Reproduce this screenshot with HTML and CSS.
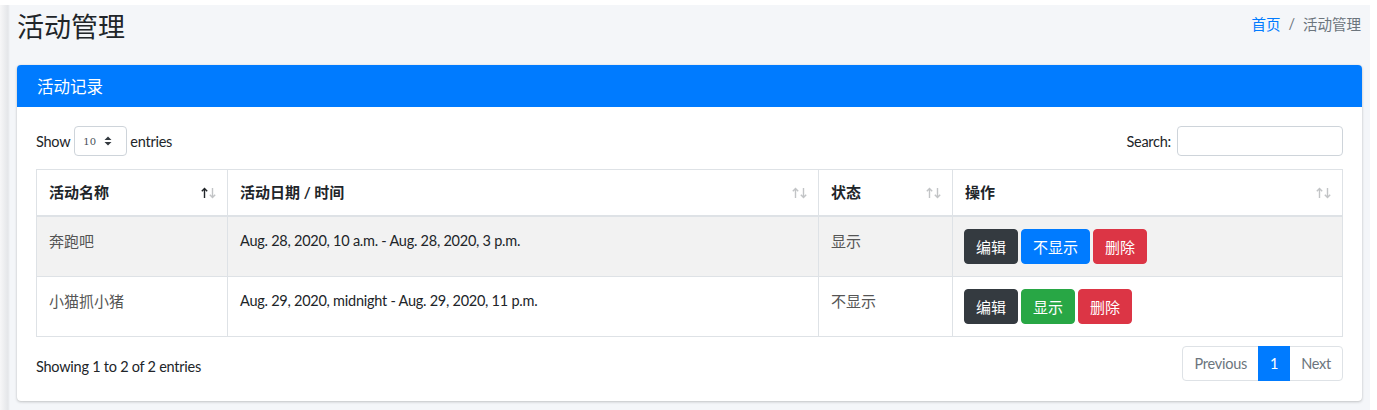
FILE: index.html
```html
<!DOCTYPE html>
<html lang="zh">
<head>
<meta charset="utf-8">
<title>活动管理</title>
<link rel="stylesheet" href="styles.css">
</head>
<body>
<div class="wrapper">
  <div class="content-header">
    <h1 class="page-title">活动管理</h1>
    <ol class="breadcrumb">
      <li class="crumb"><a class="crumb-link" href="#">首页</a></li>
      <li class="crumb-sep">/</li>
      <li class="crumb current">活动管理</li>
    </ol>
  </div>

  <div class="card">
    <div class="card-header">活动记录</div>
    <div class="card-body">
      <div class="dt-controls">
        <div class="dt-length">
          <span>Show</span>
          <div class="select">
            <span class="select-value">10</span>
            <svg class="select-caret" width="8" height="10" viewBox="0 0 8 10"><path d="M4 0.5 L7.5 4 L0.5 4 Z M4 9.5 L7.5 6 L0.5 6 Z" fill="#343a40"/></svg>
          </div>
          <span>entries</span>
        </div>
        <div class="dt-search">
          <span>Search:</span>
          <div class="search-input"></div>
        </div>
      </div>

      <table class="table">
        <colgroup>
          <col class="c1"><col class="c2"><col class="c3"><col class="c4">
        </colgroup>
        <thead>
          <tr>
            <th><div class="th-inner"><span>活动名称</span>
              <svg class="sort" width="16" height="12" viewBox="0 0 16 12"><g fill="none" stroke-width="1.4"><path d="M3.5 11 V1.5 M0.8 4.2 L3.5 1.5 L6.2 4.2" stroke="#212529"/><path d="M11.5 1 V10.5 M8.8 7.8 L11.5 10.5 L14.2 7.8" stroke="#c2c4c6"/></g></svg></div></th>
            <th><div class="th-inner"><span>活动日期 / 时间</span>
              <svg class="sort" width="16" height="12" viewBox="0 0 16 12"><g fill="none" stroke-width="1.4" stroke="#c2c4c6"><path d="M3.5 11 V1.5 M0.8 4.2 L3.5 1.5 L6.2 4.2"/><path d="M11.5 1 V10.5 M8.8 7.8 L11.5 10.5 L14.2 7.8"/></g></svg></div></th>
            <th><div class="th-inner"><span>状态</span>
              <svg class="sort" width="16" height="12" viewBox="0 0 16 12"><g fill="none" stroke-width="1.4" stroke="#c2c4c6"><path d="M3.5 11 V1.5 M0.8 4.2 L3.5 1.5 L6.2 4.2"/><path d="M11.5 1 V10.5 M8.8 7.8 L11.5 10.5 L14.2 7.8"/></g></svg></div></th>
            <th><div class="th-inner"><span>操作</span>
              <svg class="sort" width="16" height="12" viewBox="0 0 16 12"><g fill="none" stroke-width="1.4" stroke="#c2c4c6"><path d="M3.5 11 V1.5 M0.8 4.2 L3.5 1.5 L6.2 4.2"/><path d="M11.5 1 V10.5 M8.8 7.8 L11.5 10.5 L14.2 7.8"/></g></svg></div></th>
          </tr>
        </thead>
        <tbody>
          <tr class="odd">
            <td class="cjk">奔跑吧</td>
            <td>Aug. 28, 2020, 10 a.m. - Aug. 28, 2020, 3 p.m.</td>
            <td class="cjk">显示</td>
            <td class="act-cell"><div class="actions"><span class="btn btn-dark">编辑</span><span class="btn btn-primary">不显示</span><span class="btn btn-danger">删除</span></div></td>
          </tr>
          <tr>
            <td class="cjk">小猫抓小猪</td>
            <td>Aug. 29, 2020, midnight - Aug. 29, 2020, 11 p.m.</td>
            <td class="cjk">不显示</td>
            <td class="act-cell"><div class="actions"><span class="btn btn-dark">编辑</span><span class="btn btn-success">显示</span><span class="btn btn-danger">删除</span></div></td>
          </tr>
        </tbody>
      </table>

      <div class="dt-footer">
        <div class="dt-info">Showing 1 to 2 of 2 entries</div>
        <ul class="pagination">
          <li class="page-item disabled"><span class="page-link">Previous</span></li>
          <li class="page-item active"><span class="page-link">1</span></li>
          <li class="page-item disabled"><span class="page-link">Next</span></li>
        </ul>
      </div>
    </div>
  </div>
</div>
</body>
</html>
```
FILE: styles.css
```css
* { box-sizing: border-box; }

html, body {
  margin: 0;
  padding: 0;
  background: #ffffff;
}

body {
  font-family: Lato, "Noto Sans CJK SC", sans-serif;
  font-size: 14.5px;
  letter-spacing: -0.25px;
  color: #212529;
}

.wrapper {
  margin-top: 5px;
  width: 1370px;
  height: 405px;
  padding: 0 8px 0 17px;
  background: linear-gradient(to right, #f7f7f8 0, #e4e6e9 8px, #f4f6f9 10px, #f4f6f9 100%);
}

.content-header {
  height: 42px;
  margin-bottom: 18px;
  display: flex;
  align-items: center;
  justify-content: space-between;
  letter-spacing: 0;
}

.page-title {
  margin: 0;
  font-family: "Noto Sans CJK SC", sans-serif;
  font-size: 27px;
  font-weight: 400;
  line-height: 32px;
  color: #212529;
}

.breadcrumb {
  display: flex;
  list-style: none;
  margin: 0 1px 4px 0;
  padding: 0;
  font-family: "Noto Sans CJK SC", sans-serif;
  font-size: 14.5px;
  line-height: 20px;
  color: #6c757d;
}

.crumb-link {
  color: #007bff;
  text-decoration: none;
}

.crumb-sep {
  padding: 0 8px;
  font-family: Lato, sans-serif;
}

.card {
  background: #fff;
  border-radius: 4px;
  box-shadow: 0 0 1px rgba(0,0,0,.125), 0 1px 3px rgba(0,0,0,.2);
  overflow: hidden;
}

.card-header {
  height: 42px;
  background: #007bff;
  color: #fff;
  padding: 0 20px;
  font-family: "Noto Sans CJK SC", sans-serif;
  font-size: 16.5px;
  line-height: 42px;
  letter-spacing: 0;
}

.card-body {
  padding: 19px 19px 20px 19px;
}

.dt-controls {
  display: flex;
  justify-content: space-between;
  align-items: center;
  height: 30px;
}

.dt-length, .dt-search {
  display: flex;
  align-items: center;
}

.select {
  display: flex;
  align-items: center;
  justify-content: space-between;
  width: 53px;
  height: 30px;
  margin: 0 3px 0 4px;
  padding: 0 14px 0 8px;
  border: 1px solid #ced4da;
  border-radius: 4px;
  font-family: "DejaVu Serif", serif;
  font-size: 10px;
  letter-spacing: 0;
  color: #495057;
}

.search-input {
  width: 166px;
  height: 30px;
  margin-left: 6px;
  border: 1px solid #ced4da;
  border-radius: 4px;
  background: #fff;
}

.table {
  width: 100%;
  margin-top: 13px;
  border-collapse: collapse;
  table-layout: fixed;
}

.c1 { width: 191px; }
.c2 { width: 591px; }
.c3 { width: 134px; }
.c4 { width: 390px; }

.table th {
  padding: 12px 10px 12px 12px;
  line-height: 21px;
  border: 1px solid #dee2e6;
  border-bottom: 2px solid #dee2e6;
  text-align: left;
  font-family: Lato, "Noto Sans CJK SC", sans-serif;
  font-weight: 700;
  font-size: 15px;
  letter-spacing: 0;
}

.th-inner {
  display: flex;
  align-items: center;
  justify-content: space-between;
}

.sort { display: block; }

.table td {
  padding: 12px;
  line-height: 24px;
  border: 1px solid #dee2e6;
  vertical-align: top;
}

.table td.cjk {
  color: #555;
  font-size: 15px;
  letter-spacing: 0;
}

.table td.act-cell {
  padding-left: 11px;
}

.table tr.odd td {
  background: #f2f2f2;
}

.actions {
  display: flex;
  gap: 3px;
}

.btn {
  display: inline-block;
  padding: 6px 11px;
  border: 1px solid transparent;
  border-radius: 4px;
  font-family: "Noto Sans CJK SC", sans-serif;
  font-size: 15px;
  line-height: 21px;
  letter-spacing: 0;
  color: #fff;
}

.btn-dark { background: #343a40; border-color: #343a40; }
.btn-primary { background: #007bff; border-color: #007bff; }
.btn-success { background: #28a745; border-color: #28a745; }
.btn-danger { background: #dc3545; border-color: #dc3545; }

.dt-footer {
  display: flex;
  justify-content: space-between;
  align-items: flex-start;
  margin-top: 9px;
}

.dt-info {
  padding-top: 9px;
  line-height: 24px;
}

.pagination {
  display: flex;
  list-style: none;
  margin: 0;
  padding: 0;
}

.page-link {
  display: block;
  padding: 7px 11px;
  line-height: 19px;
  border: 1px solid #dee2e6;
  margin-left: -1px;
  color: #6c757d;
  background: #fff;
}

.page-item:first-child .page-link {
  margin-left: 0;
  border-radius: 4px 0 0 4px;
}

.page-item:last-child .page-link {
  border-radius: 0 4px 4px 0;
}

.page-item.active .page-link {
  background: #007bff;
  border-color: #007bff;
  color: #fff;
  position: relative;
  z-index: 1;
}
```
